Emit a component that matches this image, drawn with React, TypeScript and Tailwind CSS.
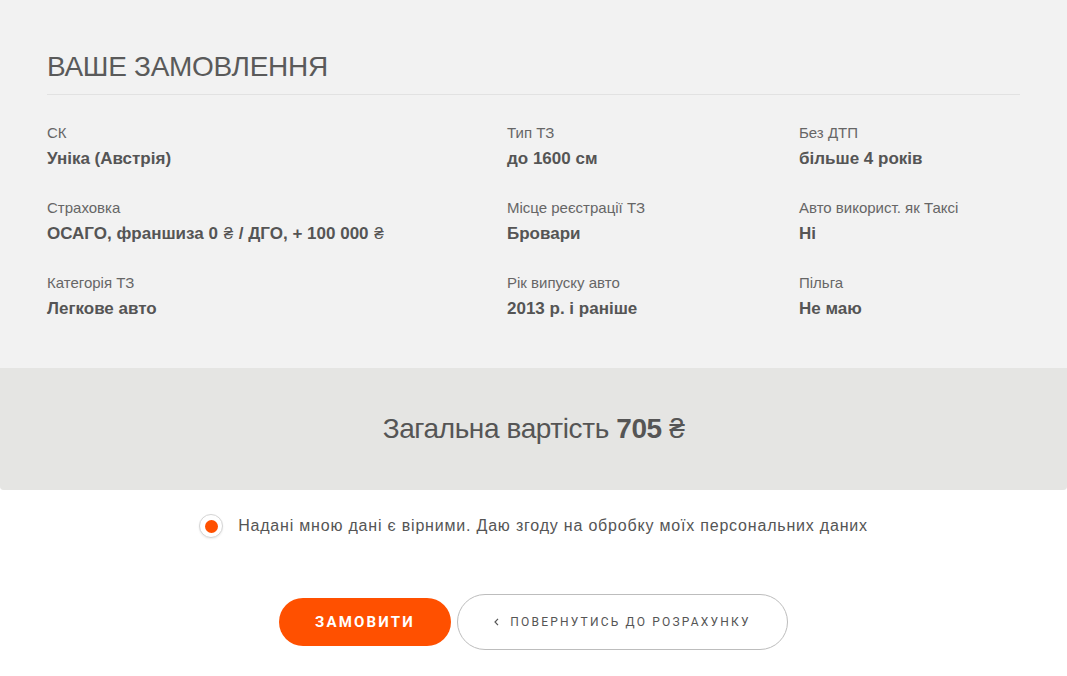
import React from "react";

const H = () => <span className="font-normal px-[1px]">₴</span>;

const rows: [string, React.ReactNode][][] = [
  [
    ["СК", "Уніка (Австрія)"],
    ["Тип ТЗ", "до 1600 см"],
    ["Без ДТП", "більше 4 років"],
  ],
  [
    ["Страховка", <>ОСАГО, франшиза 0 <H /> / ДГО, + 100 000 <H /></>],
    ["Місце реєстрації ТЗ", "Бровари"],
    ["Авто використ. як Таксі", "Ні"],
  ],
  [
    ["Категорія ТЗ", "Легкове авто"],
    ["Рік випуску авто", "2013 р. і раніше"],
    ["Пільга", "Не маю"],
  ],
];

export default function App() {
  return (
    <div className="w-[1067px] h-[676px] bg-white text-[#555] overflow-hidden" style={{ fontFamily: '"Liberation Sans", Arial, sans-serif' }}>
      <div className="bg-[#f2f2f2] rounded-b-[4px] overflow-hidden">
        <div className="pl-[47px] pr-[47px] pt-[49px] pb-[49px]">
          <h1 className="text-[28px] leading-[36px] font-light text-[#5a5a5a] tracking-[-0.3px]">ВАШЕ ЗАМОВЛЕННЯ</h1>
          <div className="mt-[9px] h-px bg-[#e2e2e2]" />
          <div className="mt-[29px] flex flex-col gap-[30px]">
            {rows.map((r, i) => (
              <div key={i} className="flex">
                {r.map(([l, v], j) => (
                  <div key={j} className={j === 0 ? "w-[460px]" : j === 1 ? "w-[292px]" : "flex-1"}>
                    <div className="text-[15px] leading-[18px] text-[#666]">{l}</div>
                    <div className="mt-[7px] text-[17px] leading-[20px] font-bold text-[#555]">{v}</div>
                  </div>
                ))}
              </div>
            ))}
          </div>
        </div>
        <div className="bg-[#e5e5e3] h-[122px] flex items-center justify-center">
          <div className="text-[28px] text-[#555] tracking-[-0.4px]">
            Загальна вартість <span className="font-bold">705</span> ₴
          </div>
        </div>
      </div>
      <div className="flex items-center justify-center mt-[24px] gap-[15px]">
        <div className="w-[24px] h-[24px] rounded-full border border-[#d5d5d5] bg-white flex items-center justify-center shadow-[0_1px_2px_rgba(0,0,0,0.08)]">
          <div className="w-[13px] h-[13px] rounded-full bg-[#ff5000]" />
        </div>
        <div className="text-[16px] text-[#555] tracking-[0.8px]">
          Надані мною дані є вірними. Даю згоду на обробку моїх персональних даних
        </div>
      </div>
      <div className="flex items-center justify-center mt-[56px] gap-[6px]" style={{ fontFamily: 'Roboto, Arial, sans-serif' }}>
        <button className="w-[172px] h-[48px] rounded-full bg-[#ff5000] text-white text-[15px] font-bold tracking-[2.2px]">
          ЗАМОВИТИ
        </button>
        <button className="w-[331px] h-[56px] rounded-full border border-[#bdbdbd] bg-white text-[#555] text-[12px] tracking-[2.2px] flex items-center justify-center gap-[11px]">
          <svg width="5" height="8" viewBox="0 0 5 8" fill="none">
            <path d="M4 0.8 L1 4 L4 7.2" stroke="#555" strokeWidth="1.2" />
          </svg>
          <span>ПОВЕРНУТИСЬ ДО РОЗРАХУНКУ</span>
        </button>
      </div>
    </div>
  );
}
